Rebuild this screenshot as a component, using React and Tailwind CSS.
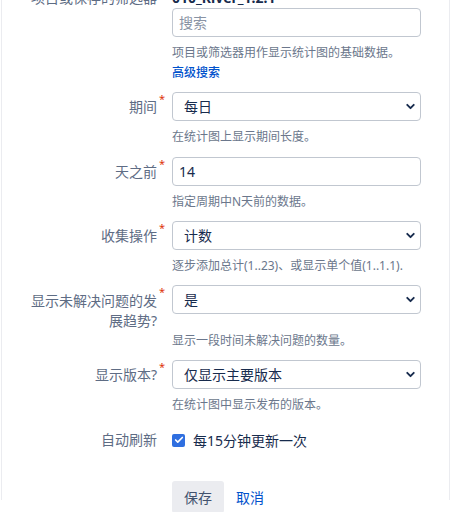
import { ChevronDown, Check } from "lucide-react";

const font = { fontFamily: '"Noto Sans", "Noto Sans CJK SC", sans-serif' };

function Label({ children, required, className = "" }) {
  return (
    <div className={`relative w-[130px] shrink-0 text-right text-[14px] leading-5 text-[#5e6c84] ${className}`}>
      {children}
      {required && (
        <span className="absolute -right-[8px] top-[-3px] text-[11px] text-[#de350b]">*</span>
      )}
    </div>
  );
}

function Desc({ children, className = "mt-[6px]" }) {
  return <div className={`text-[12px] leading-5 text-[#6b778c] ${className}`}>{children}</div>;
}

function Select({ value }) {
  return (
    <div className="flex h-[29px] items-center justify-between rounded-[4px] border border-[#c1c7d0] bg-white pl-[11px] pr-[3px] text-[14px] text-[#172b4d]">
      <span>{value}</span>
      <ChevronDown className="h-[13px] w-[13px] text-[#172b4d]" strokeWidth={3.5} />
    </div>
  );
}

function Input({ value, placeholder }) {
  return (
    <div className="flex h-[29px] items-center rounded-[4px] border border-[#c1c7d0] bg-white px-[6px] text-[14px]">
      {value ? (
        <span className="text-[#172b4d]">{value}</span>
      ) : (
        <span className="text-[#8993a4]">{placeholder}</span>
      )}
    </div>
  );
}

function Row({ label, required, labelClass = "pt-[5px]", children, className = "" }) {
  return (
    <div className={`flex gap-[15px] pl-[25px] ${className}`}>
      <Label required={required} className={labelClass}>
        {label}
      </Label>
      <div className="w-[249px]">{children}</div>
    </div>
  );
}

export default function App() {
  return (
    <div className="h-[512px] overflow-hidden bg-white" style={font}>
      <div className="ml-px h-full w-[449px] border-x border-[#ebecf0]">
        <div className="-mt-[12px]">
          <Row label="项目或保存的筛选器" labelClass="">
            <div className="text-[14px] font-bold leading-5 text-[#172b4d]">010_River_1.2.1</div>
            <Input placeholder="搜索" />
            <Desc>项目或筛选器用作显示统计图的基础数据。</Desc>
            <a className="block text-[12px] font-medium leading-5 text-[#0052cc]">高级搜索</a>
          </Row>

          <Row label="期间" required className="mt-[9px]">
            <Select value="每日" />
            <Desc>在统计图上显示期间长度。</Desc>
          </Row>

          <Row label="天之前" required className="mt-[10px]">
            <Input value="14" />
            <Desc>指定周期中N天前的数据。</Desc>
          </Row>

          <Row label="收集操作" required className="mt-[9px]">
            <Select value="计数" />
            <Desc>逐步添加总计(1..23)、或显示单个值(1..1.1).</Desc>
          </Row>

          <Row label="显示未解决问题的发展趋势?" required labelClass="pt-[6px]" className="mt-[9px]">
            <Select value="是" />
            <Desc className="mt-[17px]">显示一段时间未解决问题的数量。</Desc>
          </Row>

          <Row label="显示版本?" required className="mt-[9px]">
            <Select value="仅显示主要版本" />
            <Desc>在统计图中显示发布的版本。</Desc>
          </Row>

          <Row label="自动刷新" labelClass="" className="mt-[15px]">
            <div className="flex h-5 items-center gap-[8px]">
              <span className="flex h-[13px] w-[13px] items-center justify-center rounded-[2px] bg-[#2f6fe0]">
                <Check className="h-[10px] w-[10px] text-white" strokeWidth={4} />
              </span>
              <span className="text-[14px] text-[#172b4d]">每15分钟更新一次</span>
            </div>
          </Row>

          <div className="mt-[31px] flex items-center pl-[170px]">
            <button className="h-[32px] rounded-[3px] bg-[#ebecf0] px-[12px] text-[14px] text-[#42526e]">保存</button>
            <button className="ml-[2px] px-[10px] text-[14px] text-[#0052cc]">取消</button>
          </div>
        </div>
      </div>
    </div>
  );
}
